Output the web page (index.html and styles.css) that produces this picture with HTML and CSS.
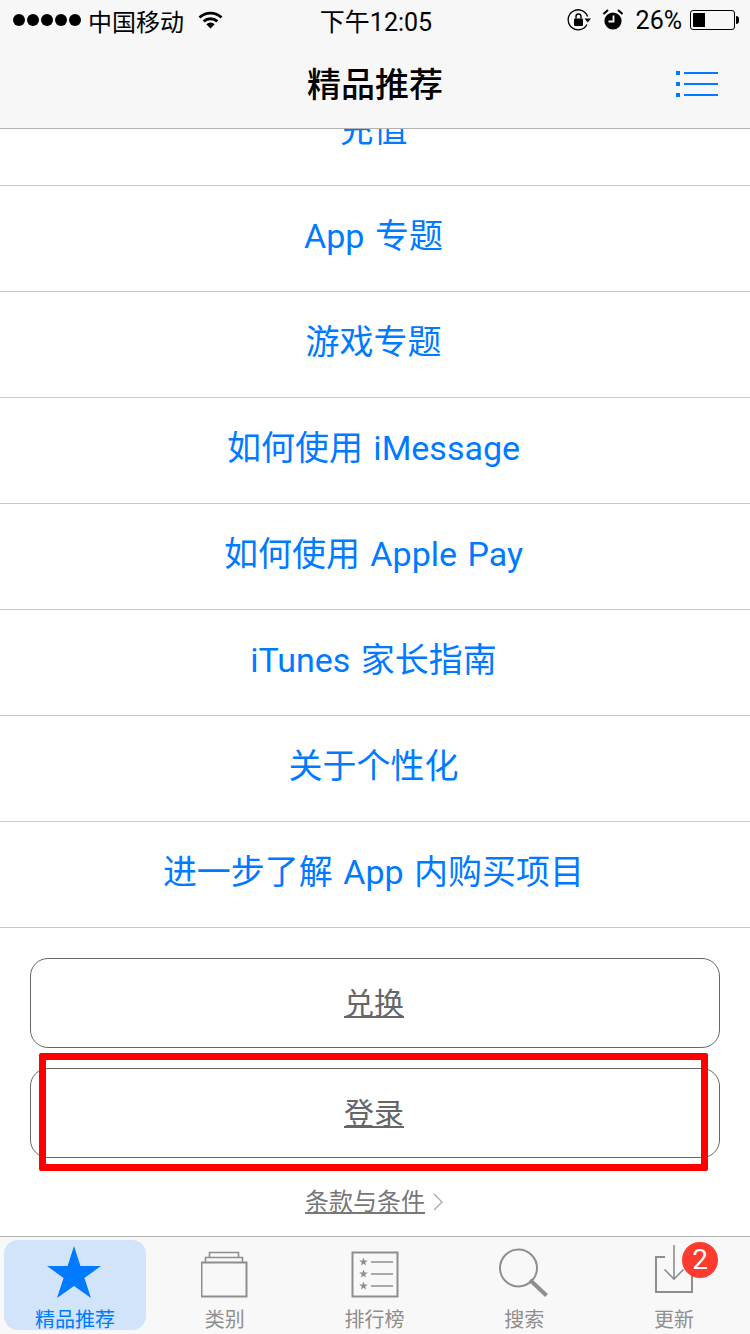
FILE: index.html
```html
<!DOCTYPE html>
<html lang="zh-CN">
<head>
    <meta charset="UTF-8">
    <meta name="viewport" content="width=device-width, initial-scale=1.0">
    <title>精品推荐</title>
    <link rel="stylesheet" href="styles.css">
</head>
<body>
    <div class="screen">
        <header class="top-bar">
            <div class="status-bar">
                <div class="status-left">
                    <div class="signal"><i></i><i></i><i></i><i></i><i></i></div>
                    <span class="carrier">中国移动</span>
                    <svg class="wifi" width="25" height="18" viewBox="0 0 24 18">
                        <path d="M1 6.5 A16 16 0 0 1 23 6.5" fill="none" stroke="#000" stroke-width="2.8"/>
                        <path d="M5.2 10.4 A10 10 0 0 1 18.8 10.4" fill="none" stroke="#000" stroke-width="2.8"/>
                        <path d="M12 17.5 L7.8 13.2 A6 6 0 0 1 16.2 13.2 Z" fill="#000"/>
                    </svg>
                </div>
                <div class="status-time">下午12:05</div>
                <div class="status-right">
                    <svg width="24" height="24" viewBox="0 0 24 24">
                        <path d="M20 16.5 A10 10 0 1 1 20.6 8.5" fill="none" stroke="#000" stroke-width="1.3"/>
                        <path d="M17.5 10.5 L24 10.5 L20.7 14.5 Z" fill="#000"/>
                        <rect x="7" y="10.5" width="9" height="7.5" rx="1" fill="#000"/>
                        <path d="M9 10.5 V8.5 A2.5 2.5 0 0 1 14 8.5 V10.5" fill="none" stroke="#000" stroke-width="1.4"/>
                    </svg>
                    <svg class="alarm" width="20" height="22" viewBox="0 0 20 22">
                        <circle cx="10" cy="12" r="8.6" fill="#000"/>
                        <path d="M0.5 5 L5 1 M19.5 5 L15 1" stroke="#000" stroke-width="2"/>
                        <path d="M10.5 6.5 V12.5 H5.5" fill="none" stroke="#f7f7f7" stroke-width="1.8"/>
                    </svg>
                    <span class="battery-pct">26%</span>
                    <div class="battery"><div class="battery-level"></div></div>
                    <div class="battery-tip"></div>
                </div>
            </div>
            <div class="nav-bar">
                <h1 class="nav-title">精品推荐</h1>
                <svg class="list-icon" width="44" height="26" viewBox="0 0 44 26">
                    <rect x="0" y="0" width="4" height="4" fill="#007aff"/>
                    <rect x="0" y="11" width="4" height="4" fill="#007aff"/>
                    <rect x="0" y="22" width="4" height="4" fill="#007aff"/>
                    <rect x="8" y="1" width="34" height="2" fill="#007aff"/>
                    <rect x="8" y="12" width="34" height="2" fill="#007aff"/>
                    <rect x="8" y="23" width="34" height="2" fill="#007aff"/>
                </svg>
            </div>
        </header>

        <main class="content">
            <ul class="link-list">
                <li>充值</li>
                <li>App 专题</li>
                <li>游戏专题</li>
                <li>如何使用 iMessage</li>
                <li>如何使用 Apple Pay</li>
                <li>iTunes 家长指南</li>
                <li>关于个性化</li>
                <li>进一步了解 App 内购买项目</li>
            </ul>
            <div class="actions">
                <div class="action-btn"><u>兑换</u></div>
                <div class="action-btn"><u>登录</u></div>
            </div>
            <div class="terms"><u>条款与条件</u>
                <svg width="10" height="18" viewBox="0 0 10 18"><path d="M1 1 L9 9 L1 17" fill="none" stroke="#a8a8a8" stroke-width="1.3"/></svg>
            </div>
            <div class="highlight-box"></div>
        </main>

        <nav class="tab-bar">
            <div class="tab tab-active">
                <svg width="56" height="52" viewBox="1 0 56 52">
                    <path d="M28 0 L34.4 20 L55 20 L38.4 32 L45 52 L28 40 L11 52 L17.6 32 L1 20 L21.6 20 Z" fill="#007aff"/>
                </svg>
                <span>精品推荐</span>
            </div>
            <div class="tab">
                <svg width="48" height="48" viewBox="1 0 48 48">
                    <rect x="1.5" y="12.5" width="45" height="34" fill="none" stroke="#8e8e8e" stroke-width="2"/>
                    <path d="M5.5 12 V7.5 H42.5 V12" fill="none" stroke="#8e8e8e" stroke-width="1.6"/>
                    <path d="M9.5 7 V2.5 H38.5 V7" fill="none" stroke="#8e8e8e" stroke-width="1.6"/>
                </svg>
                <span>类别</span>
            </div>
            <div class="tab">
                <svg width="48" height="48" viewBox="0 0 48 48">
                    <rect x="1.5" y="2.5" width="45" height="44" fill="none" stroke="#8e8e8e" stroke-width="2"/>
                    <path class="rank-star" transform="translate(12.5 12)" d="M0 -4.5 L1.1 -1.4 L4.3 -1.4 L1.7 .5 L2.6 3.6 L0 1.8 L-2.6 3.6 L-1.7 .5 L-4.3 -1.4 L-1.1 -1.4 Z"/>
                    <path class="rank-star" transform="translate(12.5 24)" d="M0 -4.5 L1.1 -1.4 L4.3 -1.4 L1.7 .5 L2.6 3.6 L0 1.8 L-2.6 3.6 L-1.7 .5 L-4.3 -1.4 L-1.1 -1.4 Z"/>
                    <path class="rank-star" transform="translate(12.5 36)" d="M0 -4.5 L1.1 -1.4 L4.3 -1.4 L1.7 .5 L2.6 3.6 L0 1.8 L-2.6 3.6 L-1.7 .5 L-4.3 -1.4 L-1.1 -1.4 Z"/>
                    <path d="M20 12 H42 M20 24 H42 M20 36 H42" stroke="#8e8e8e" stroke-width="1.6"/>
                </svg>
                <span>排行榜</span>
            </div>
            <div class="tab">
                <svg width="50" height="50" viewBox="0 0 50 50">
                    <circle cx="19.5" cy="20" r="18.5" fill="none" stroke="#8e8e8e" stroke-width="2"/>
                    <path d="M31 32 L47.5 47.5" stroke="#8e8e8e" stroke-width="4"/>
                </svg>
                <span>搜索</span>
            </div>
            <div class="tab">
                <svg class="update-icon" width="48" height="48" viewBox="0 0 48 48">
                    <path d="M15 12 H6 V47 H42 V12 H33" fill="none" stroke="#8e8e8e" stroke-width="2"/>
                    <path d="M24 0 V34 M14.5 24.5 L24 34 L33.5 24.5" fill="none" stroke="#8e8e8e" stroke-width="1.6"/>
                </svg>
                <span>更新</span>
                <div class="badge">2</div>
            </div>
        </nav>
    </div>
</body>
</html>
```

FILE: styles.css
```css
* {
    box-sizing: border-box;
}

html, body {
    margin: 0;
    padding: 0;
}

body {
    font-family: Roboto, "Noto Sans CJK SC", sans-serif;
    background-color: #fff;
}

.screen {
    width: 750px;
    height: 1334px;
    display: flex;
    flex-direction: column;
    overflow: hidden;
}

.top-bar {
    height: 129px;
    flex: none;
    background-color: #f7f7f7;
    border-bottom: 1px solid #b2b2b2;
    position: relative;
    z-index: 1;
}

.status-bar {
    height: 40px;
    padding: 0 11px 0 13px;
    display: grid;
    grid-template-columns: 1fr auto 1fr;
    align-items: center;
    font-size: 24px;
    color: #000;
}

.status-left {
    display: flex;
    align-items: center;
}

.signal {
    display: flex;
    gap: 2px;
}

.signal i {
    width: 12px;
    height: 12px;
    border-radius: 50%;
    background-color: #000;
}

.carrier {
    margin-left: 7px;
}

.wifi {
    margin-left: 14px;
}

.status-time {
    font-size: 25px;
}

.status-right {
    display: flex;
    align-items: center;
    justify-content: flex-end;
}

.alarm {
    margin-left: 12px;
}

.battery-pct {
    margin-left: 13px;
    font-size: 25px;
}

.battery {
    width: 45px;
    height: 20px;
    margin-left: 8px;
    padding: 2px;
    border: 1px solid #000;
    border-radius: 3px;
}

.battery-level {
    width: 12px;
    height: 100%;
    background-color: #000;
}

.battery-tip {
    width: 3px;
    height: 8px;
    margin-left: 1px;
    background-color: #000;
    border-radius: 0 3px 3px 0;
}

.nav-bar {
    height: 88px;
    position: relative;
    display: flex;
    align-items: center;
    justify-content: center;
}

.nav-title {
    margin: 0 0 4px 0;
    font-size: 34px;
    font-weight: 500;
    color: #000;
}

.list-icon {
    position: absolute;
    right: 30px;
    top: 31px;
}

.content {
    flex: 1;
    position: relative;
    overflow: hidden;
    background-color: #fff;
}

.link-list {
    list-style: none;
    margin: -49px 0 0;
    padding: 0;
}

.link-list li {
    height: 106px;
    padding: 0 3px 10px 0;
    display: flex;
    align-items: center;
    justify-content: center;
    border-bottom: 1px solid #c8c7cc;
    font-size: 34px;
    word-spacing: 2px;
    color: #007aff;
}

.actions {
    padding: 30px 30px 0;
    display: flex;
    flex-direction: column;
    gap: 20px;
}

.action-btn {
    height: 90px;
    padding: 0 2px 4px 0;
    display: flex;
    align-items: center;
    justify-content: center;
    border: 1px solid #666;
    border-radius: 18px;
    font-size: 30px;
    color: #666;
}

.action-btn u {
    text-decoration-thickness: 2px;
    text-underline-offset: 2px;
}

.terms {
    margin-top: 26px;
    padding-right: 2px;
    display: flex;
    align-items: center;
    justify-content: center;
    gap: 8px;
    font-size: 24px;
    line-height: 36px;
    color: #777;
}

.highlight-box {
    position: absolute;
    left: 39px;
    top: 924px;
    width: 669px;
    height: 118px;
    border: 7px solid #ff0000;
    border-radius: 2px;
}

.tab-bar {
    height: 98px;
    flex: none;
    display: grid;
    grid-template-columns: repeat(5, 149.75px);
    padding: 3px 0 4px 4px;
    background-color: #f8f8f8;
    border-top: 1px solid #b2b2b2;
}

.tab {
    position: relative;
    width: 142px;
    height: 90px;
    display: flex;
    flex-direction: column;
    align-items: center;
    justify-content: flex-end;
    border-radius: 14px;
    color: #8e8e8e;
    font-size: 20px;
    line-height: 26px;
}

.tab span {
    margin-bottom: -3px;
}

.tab svg {
    margin-bottom: 9px;
}

.tab .update-icon {
    margin-bottom: 14px;
}

.rank-star {
    fill: #8e8e8e;
}

.tab-active {
    background-color: #d2e4f9;
    color: #007aff;
}

.badge {
    position: absolute;
    top: 2px;
    left: 79px;
    width: 36px;
    height: 36px;
    border-radius: 50%;
    background-color: #ff3b30;
    color: #fff;
    font-size: 28px;
    line-height: 36px;
    text-align: center;
}
```
